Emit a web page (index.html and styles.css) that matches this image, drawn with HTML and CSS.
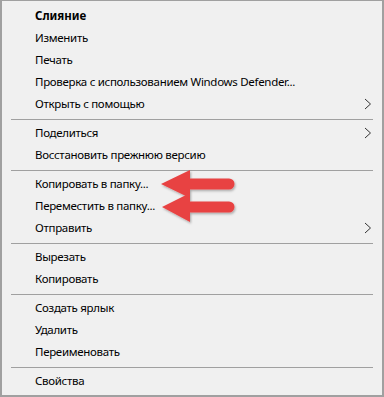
FILE: index.html
```html
<!DOCTYPE html>
<html>
<head>
<meta charset="utf-8">
<link rel="stylesheet" href="styles.css">
</head>
<body>
<div class="menu">
  <div class="item bold">Слияние</div>
  <div class="item">Изменить</div>
  <div class="item">Печать</div>
  <div class="item">Проверка с использованием Windows Defender...</div>
  <div class="item sub">Открыть с помощью<svg class="chev" width="8" height="12" viewBox="0 0 8 12"><polyline points="1,1 6.5,6 1,11"/></svg></div>
  <div class="sep"></div>
  <div class="item sub">Поделиться<svg class="chev" width="8" height="12" viewBox="0 0 8 12"><polyline points="1,1 6.5,6 1,11"/></svg></div>
  <div class="item">Восстановить прежнюю версию</div>
  <div class="sep"></div>
  <div class="item">Копировать в папку...</div>
  <div class="item">Переместить в папку...</div>
  <div class="item sub">Отправить<svg class="chev" width="8" height="12" viewBox="0 0 8 12"><polyline points="1,1 6.5,6 1,11"/></svg></div>
  <div class="sep"></div>
  <div class="item">Вырезать</div>
  <div class="item">Копировать</div>
  <div class="sep"></div>
  <div class="item">Создать ярлык</div>
  <div class="item">Удалить</div>
  <div class="item">Переименовать</div>
  <div class="sep"></div>
  <div class="item">Свойства</div>

  <svg class="arrows" width="90" height="70" viewBox="0 0 90 70">
    <defs>
      <filter id="sh" x="-20%" y="-20%" width="140%" height="140%">
        <feDropShadow dx="1" dy="1.5" stdDeviation="1.2" flood-color="#000" flood-opacity="0.3"/>
      </filter>
    </defs>
    <g fill="#e84343" filter="url(#sh)">
      <path d="M2 16 L31 2 L31 10.5 L70 10.5 A5.5 5.5 0 0 1 70 21.5 L31 21.5 L31 30 Z"/>
      <path d="M3 39 L31 25 L31 33.5 L70 33.5 A5.5 5.5 0 0 1 70 44.5 L31 44.5 L31 54 Z"/>
    </g>
  </svg>
</div>
</body>
</html>
```
FILE: styles.css
```css
html, body {
  margin: 0;
  padding: 0;
  background: #f0f0f0;
}
.menu {
  position: relative;
  box-sizing: border-box;
  width: 384px;
  height: 397px;
  background: #f0f0f0;
  border: 2px solid #a0a0a0;
  border-top-width: 1px;
  padding: 4px 0 0 0;
  font-family: "Noto Sans", "Open Sans", sans-serif;
  font-size: 11.5px;
  letter-spacing: -0.3px;
  color: #000;
  overflow: hidden;
}
.item {
  position: relative;
  height: 22px;
  line-height: 22px;
  padding-left: 33px;
  white-space: nowrap;
}
.bold {
  font-weight: bold;
  letter-spacing: 0;
}
.chev {
  position: absolute;
  right: 10px;
  top: 5px;
  fill: none;
  stroke: #333;
  stroke-width: 1;
}
.sep {
  height: 7px;
  margin: 0 9px 0 9px;
  background: linear-gradient(#a0a0a0, #a0a0a0) no-repeat 0 4px / 100% 1px;
}
.arrows {
  position: absolute;
  left: 157px;
  top: 167px;
}
```
